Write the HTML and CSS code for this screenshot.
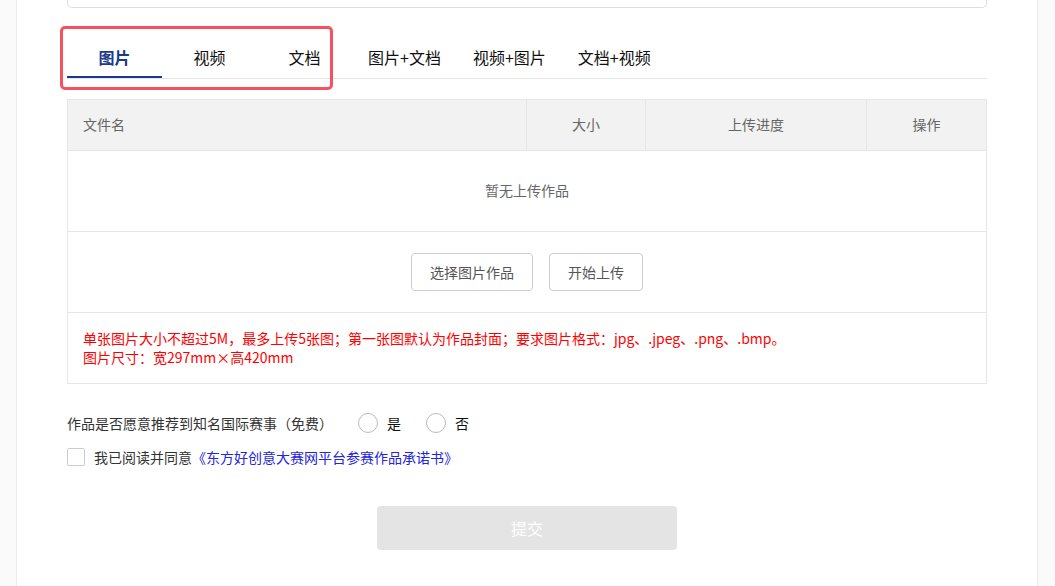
FILE: index.html
```html
<!DOCTYPE html>
<html lang="zh-CN">
<head>
    <meta charset="UTF-8">
    <meta name="viewport" content="width=device-width, initial-scale=1.0">
    <title>上传作品</title>
    <link rel="stylesheet" href="styles.css">
</head>
<body>
    <div class="container">
        <div class="prev-input"></div>

        <div class="tabs">
            <span class="tab tab-fixed active">图片</span>
            <span class="tab tab-fixed">视频</span>
            <span class="tab tab-fixed">文档</span>
            <span class="tab">图片+文档</span>
            <span class="tab">视频+图片</span>
            <span class="tab">文档+视频</span>
            <div class="highlight"></div>
        </div>

        <table class="file-table">
            <thead>
                <tr>
                    <th class="col-name">文件名</th>
                    <th class="col-size">大小</th>
                    <th class="col-progress">上传进度</th>
                    <th class="col-op">操作</th>
                </tr>
            </thead>
            <tbody>
                <tr class="row-empty"><td colspan="4">暂无上传作品</td></tr>
                <tr class="row-actions">
                    <td colspan="4">
                        <div class="btn-group">
                            <button class="btn">选择图片作品</button>
                            <button class="btn">开始上传</button>
                        </div>
                    </td>
                </tr>
                <tr class="row-note">
                    <td colspan="4">
                        <p>单张图片大小不超过5M，最多上传5张图；第一张图默认为作品封面；要求图片格式：jpg、.jpeg、.png、.bmp。</p>
                        <p>图片尺寸：宽297mm×高420mm</p>
                    </td>
                </tr>
            </tbody>
        </table>

        <div class="form-row question">
            <span class="question-text">作品是否愿意推荐到知名国际赛事（免费）</span>
            <label class="radio"><span class="radio-dot"></span>是</label>
            <label class="radio"><span class="radio-dot"></span>否</label>
        </div>

        <div class="form-row agree">
            <span class="checkbox"></span>
            <span>我已阅读并同意</span><a href="#" class="agree-link">《东方好创意大赛网平台参赛作品承诺书》</a>
        </div>

        <div class="submit-wrap">
            <button class="submit" disabled>提交</button>
        </div>
    </div>
</body>
</html>
```

FILE: styles.css
```css
html, body { margin: 0; padding: 0; }
body {
    background-color: #fafafa;
    font-family: "Noto Sans CJK SC", "Noto Sans", sans-serif;
    color: #333;
    font-size: 14px;
}
.container {
    width: 920px;
    height: 586px;
    margin: 0 0 0 16px;
    padding: 0 50px;
    background-color: #fff;
    border-left: 1px solid #ececec;
    border-right: 1px solid #ececec;
    box-sizing: content-box;
}
.prev-input {
    height: 7px;
    border: 1px solid #ddd;
    border-top: none;
    border-radius: 0 0 5px 5px;
}

/* tabs */
.tabs {
    position: relative;
    display: flex;
    margin-top: 30px;
    border-bottom: 1px solid #e6e6e6;
}
.tab {
    height: 40px;
    line-height: 39px;
    padding: 0 16px;
    font-size: 16px;
    color: #111;
    text-align: center;
}
.tab-fixed { width: 95px; padding: 0; box-sizing: border-box; }
.tab.active {
    color: #1a3a8f;
    font-weight: bold;
    border-bottom: 2px solid #1a3a8f;
    margin-bottom: -1px;
}
.highlight {
    position: absolute;
    left: -7px;
    top: -12px;
    width: 267px;
    height: 58px;
    border: 3px solid #f5525f;
    border-radius: 5px;
    pointer-events: none;
}

/* table */
.file-table {
    width: 100%;
    margin-top: 20px;
    border-collapse: collapse;
    table-layout: fixed;
}
.file-table th, .file-table td { border: 1px solid #e6e6e6; padding: 0; }
.file-table th {
    height: 48px;
    background-color: #f2f2f2;
    font-weight: normal;
    color: #666;
    text-align: center;
    padding-bottom: 2px;
}
.file-table th.col-name { text-align: left; padding-left: 15px; width: 443px; }
.col-size { width: 118px; }
.col-progress { width: 220px; }
.row-empty td { height: 78px; text-align: center; color: #666; padding-bottom: 2px; }
.row-actions td { height: 80px; }
.btn-group { display: flex; justify-content: center; gap: 16px; }
.btn {
    height: 38px;
    padding: 0 18px;
    border: 1px solid #ccc;
    border-radius: 4px;
    background-color: #fff;
    color: #555;
    font-family: inherit;
    font-size: 14px;
}
.row-note td { height: 70px; padding-left: 15px; color: #f00; }
.row-note p { margin: 0; line-height: 19px; }

/* form rows */
.form-row { display: flex; align-items: center; }
.question { margin-top: 29px; height: 20px; }
.question-text { margin-right: 25px; }
.radio { display: flex; align-items: center; margin-right: 25px; color: #111; }
.radio-dot {
    width: 18px;
    height: 18px;
    border: 1px solid #bbb;
    border-radius: 50%;
    margin-right: 9px;
}
.agree { margin-top: 15px; height: 18px; }
.checkbox {
    width: 16px;
    height: 16px;
    border: 1px solid #ccc;
    border-radius: 2px;
    margin-right: 9px;
}
.agree-link { color: #2424d8; text-decoration: none; }

.submit-wrap { display: flex; justify-content: center; margin-top: 40px; }
.submit {
    width: 300px;
    height: 44px;
    border: none;
    border-radius: 4px;
    background-color: #e4e4e4;
    color: #fff;
    font-family: inherit;
    font-size: 16px;
}
```
